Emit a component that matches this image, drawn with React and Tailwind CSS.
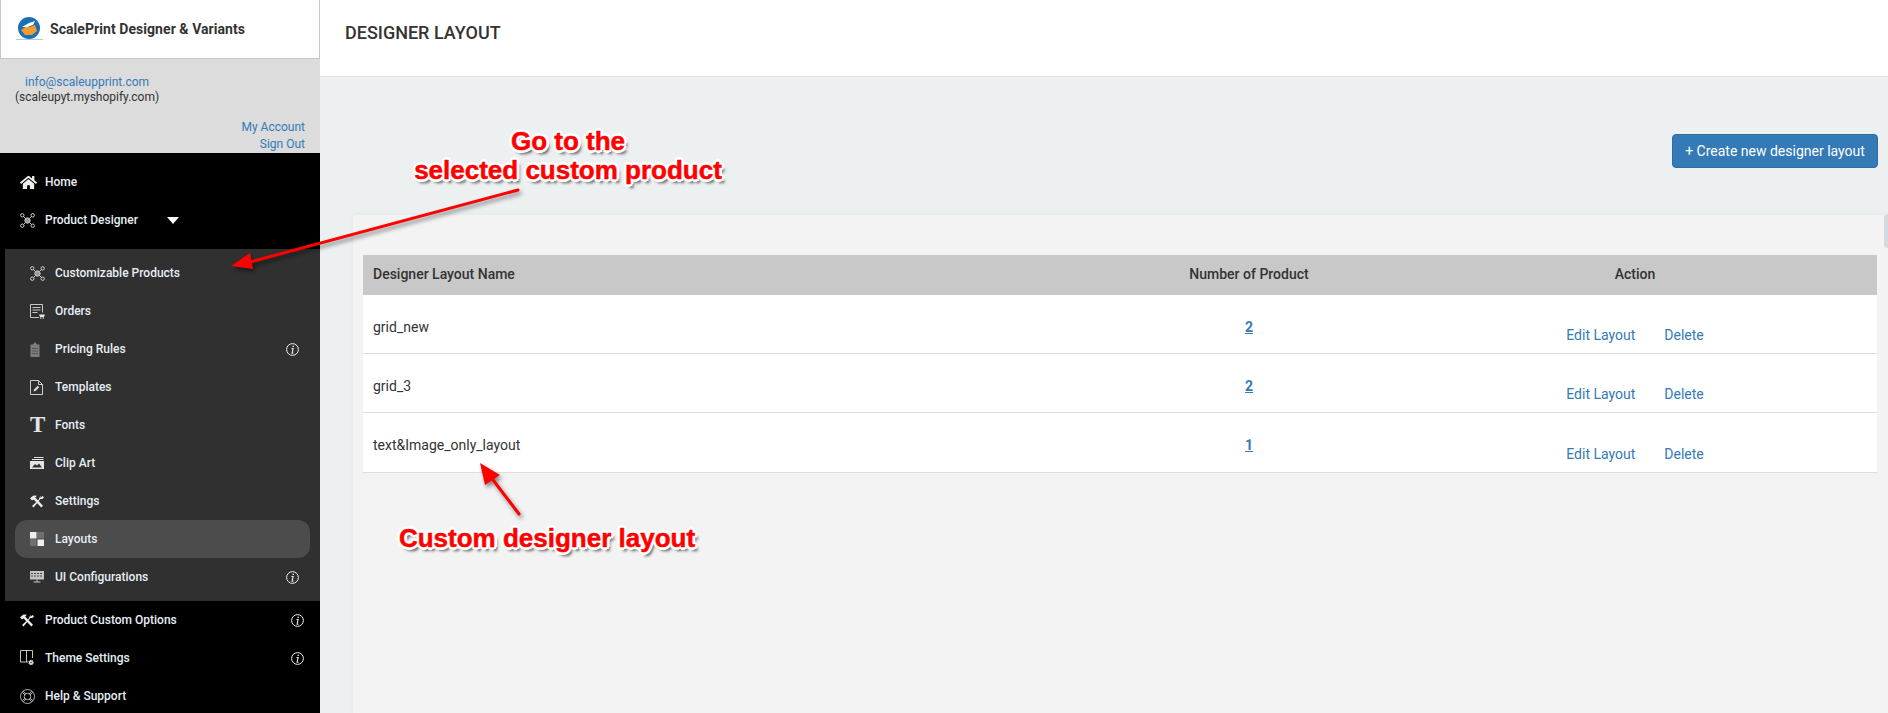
import { FaHome } from "react-icons/fa";

const font = { fontFamily: "Roboto, sans-serif" };

function InfoIcon() {
  return (
    <svg width="13" height="13" viewBox="0 0 13 13" fill="none" stroke="#f0f0f0">
      <circle cx="6.500" cy="6.500" r="5.900" strokeWidth="1" />
      <path d="M7.200 2.800v1.200" strokeWidth="1.400" />
      <path d="M5.500 5.500h1.600L6.100 10.200h1.400" strokeWidth="1.100" />
    </svg>
  );
}

function NodesIcon() {
  return (
    <svg width="15" height="15" viewBox="0 0 15 15" fill="none" stroke="#dcdcdc" strokeWidth="0.9">
      <circle cx="2.300" cy="2.300" r="1.700" />
      <circle cx="12.700" cy="2.300" r="1.700" />
      <circle cx="2.300" cy="12.700" r="1.700" />
      <circle cx="12.700" cy="12.700" r="1.700" />
      <path d="M3.500 3.500l2 2M11.500 3.500l-2 2M3.500 11.500l2-2M11.500 11.500l-2-2" />
      <circle cx="7.500" cy="7.500" r="2.700" fill="#9a9a9a" stroke="#cfcfcf" />
    </svg>
  );
}

function OrdersIcon() {
  return (
    <svg width="15" height="15" viewBox="0 0 15 15" fill="none" stroke="#d8d8d8" strokeWidth="0.9">
      <path d="M9 13.500H.500V.500h12v8" />
      <path d="M2.500 3.500h8M2.500 6h8M2.500 8.500h5" />
      <path d="M9 10.500h6l-1 2.500h-4z" fill="#e4e4e4" stroke="none" />
      <circle cx="10.800" cy="14" r="0.800" fill="#e4e4e4" stroke="none" />
      <circle cx="13.200" cy="14" r="0.800" fill="#e4e4e4" stroke="none" />
    </svg>
  );
}

function TagIcon() {
  return (
    <svg width="10" height="15" viewBox="0 0 10 15" fill="#7d7d7d">
      <path d="M5 0l2 2.500h2.500V15H.500V2.500H3z" />
      <path d="M2 6.500h6M2 9h6M2 11.500h6" stroke="#4d4d4d" strokeWidth="0.8" />
    </svg>
  );
}

function TemplateIcon() {
  return (
    <svg width="13" height="15" viewBox="0 0 13 15" fill="none" stroke="#e0e0e0" strokeWidth="0.9">
      <path d="M.500.500h8l4 4v10H.500z" />
      <path d="M8.500.500v4h4" />
      <path d="M3.500 11.500l.8-2.300 3.400-3.400 1.500 1.500-3.400 3.400z" fill="#e0e0e0" stroke="none" />
    </svg>
  );
}

function FontIcon() {
  return <span className="-mt-[2px] block text-[23px] leading-none font-bold text-[#e5e5e5]" style={{ fontFamily: "'Liberation Serif', serif" }}>T</span>;
}

function ClipIcon() {
  return (
    <svg width="14" height="12" viewBox="0 0 14 12" fill="#e4e4e4">
      <path d="M4 0h9.500v1H4zM2 2h11.500v1H2z" />
      <path d="M0 4h14v8H0zM2 10.500h10L9 6.500 7 8.500 5 7z" fillRule="evenodd" />
    </svg>
  );
}

function ToolsIcon() {
  return (
    <svg width="15" height="13" viewBox="0 0 15 13" fill="#ececec">
      <path d="M0 3.300L3.500.500 7 .800 5.200 2.600 13 10.800 11.300 12.500 3.700 4.400 2 5.600z" />
      <path d="M10.300.800l.3 2 1.900-1.700 1.500 1.200-1.600 1.800-2-.1L3.600 12.500 2 11 8.700 4.800z" />
    </svg>
  );
}

function LayoutIcon() {
  return (
    <svg width="14" height="14" viewBox="0 0 14 14">
      <path d="M0 0h6.500v6.500H0z" fill="#eeeeee" />
      <path d="M7 0h7v6.500H7zM0 7h6.500v7H0z" fill="#6f6f6f" />
      <path d="M7.500 7.500H14V14H7.500z" fill="#eeeeee" />
    </svg>
  );
}

function UiIcon() {
  return (
    <svg width="14" height="12" viewBox="0 0 14 12" fill="none">
      <path d="M0 0h14v8.500H0z" fill="#c4c4c4" />
      <path d="M1 2.500h12M1 5h12" stroke="#3a3a3a" strokeWidth="0.9" strokeDasharray="2 1" />
      <path d="M3.500 11h7M7 8.500V11" stroke="#c4c4c4" strokeWidth="1" />
    </svg>
  );
}

function ThemeIcon() {
  return (
    <svg width="14" height="16" viewBox="0 0 14 16" fill="none" stroke="#d8d8d8" strokeWidth="0.9">
      <path d="M8 12H.500V.500h12V8M6.500.500V12" />
      <circle cx="11" cy="12.500" r="2" fill="#ececec" stroke="#ececec" strokeDasharray="1 0.500" strokeWidth="1.300" />
      <circle cx="11" cy="12.500" r="0.700" fill="#000" stroke="none" />
    </svg>
  );
}

function HelpIcon() {
  return (
    <svg width="15" height="15" viewBox="0 0 15 15" fill="none" stroke="#d8d8d8" strokeWidth="0.8">
      <circle cx="7.500" cy="7.500" r="7" />
      <circle cx="7.500" cy="7.500" r="3.300" />
      <path d="M2.200 3.400l3 2.500M3.400 2.200l2.500 3M12.800 3.400l-3 2.500M11.600 2.200l-2.500 3M2.200 11.600l3-2.500M3.400 12.800l2.500-3M12.800 11.600l-3-2.500M11.600 12.800l-2.500-3" />
    </svg>
  );
}

function NavItem({ icon, label, info, active, sub }) {
  return (
    <div
      className={`flex h-[38px] items-center text-[12px] font-medium text-[#e6eef5] ${
        sub ? "mx-[10px] pl-[15px] pr-[11px]" : "pl-[20px] pr-[16px]"
      } ${active ? "rounded-[12px] bg-[#4c4c4c]" : ""}`}
    >
      <span className="flex w-[25px] shrink-0 items-center">{icon}</span>
      <span>{label}</span>
      {info && (
        <span className="ml-auto">
          <InfoIcon />
        </span>
      )}
    </div>
  );
}

const rows = [
  ["grid_new", "2"],
  ["grid_3", "2"],
  ["text&Image_only_layout", "1"],
];

function Arrow({ x1, y1, x2, y2, tip }) {
  return (
    <svg
      className="pointer-events-none absolute top-0 left-0 drop-shadow-[2px_3px_2px_rgba(0,0,0,0.45)]"
      width="1888"
      height="713"
      viewBox="0 0 1888 713"
      fill="none"
    >
      <line x1={x1} y1={y1} x2={x2} y2={y2} stroke="#ff0000" strokeWidth="3" strokeLinecap="round" />
      <polygon points={tip} fill="#ff0000" />
    </svg>
  );
}

const note =
  "absolute text-center text-[26px] leading-[29px] font-bold text-[#ff0000] [font-family:'Liberation_Sans',sans-serif] [-webkit-text-stroke:0.5px_#ff0000] [text-shadow:-3px_0_0_#fff,3px_0_0_#fff,0_-3px_0_#fff,0_3px_0_#fff,-2px_-2px_0_#fff,2px_-2px_0_#fff,-2px_2px_0_#fff,2px_2px_0_#fff,3px_4px_3px_#555]";

export default function App() {
  return (
    <div className="relative flex h-[713px] w-[1888px] overflow-hidden bg-[#ecf0f1] text-[#333]" style={font}>
      {/* Sidebar */}
      <div className="flex w-[320px] shrink-0 flex-col bg-black">
        <div className="flex h-[59px] shrink-0 items-center border-x border-b border-[#c8c8c8] bg-white pl-[15px]">
          <svg width="27" height="24" viewBox="0 0 27 24" className="shrink-0">
            <circle cx="13" cy="11" r="11" fill="#1a6fb5" />
            <path d="M5 13l6-4 3 1 5-2 2 6-5 4H9z" fill="#f59a2e" />
            <path d="M6 10l7-4 6-2-2 4-6 2z" fill="#ffffff" />
            <path d="M0 22.500h27" stroke="#a9cdec" strokeWidth="1" />
          </svg>
          <span className="ml-[7px] text-[14px] font-bold tracking-[0.06px] text-[#333]">ScalePrint Designer &amp; Variants</span>
        </div>
        <div className="h-[94px] shrink-0 bg-[#dcdcdc] pr-[15px] text-[12px] leading-[15px]">
          <div className="pt-[16px] pl-[25px] text-[#337ab7]">info@scaleupprint.com</div>
          <div className="pl-[15px] text-[#333]">(scaleupyt.myshopify.com)</div>
          <div className="mt-[14px] text-right leading-[17px] text-[#337ab7]">
            <div>My Account</div>
            <div>Sign Out</div>
          </div>
        </div>
        <div className="flex-1 pt-[10px]">
          <NavItem icon={<FaHome size={17} color="#eeeeee" />} label="Home" />
          <NavItem
            icon={<NodesIcon />}
            label={
              <span className="flex items-center">
                Product Designer
                <span className="ml-[29px] h-0 w-0 border-x-[6px] border-t-[7px] border-x-transparent border-t-white" />
              </span>
            }
          />
          <div className="mt-[10px] ml-[5px] bg-[#303030] py-[5px]">
            <NavItem sub icon={<NodesIcon />} label="Customizable Products" />
            <NavItem sub icon={<OrdersIcon />} label="Orders" />
            <NavItem sub icon={<TagIcon />} label="Pricing Rules" info />
            <NavItem sub icon={<TemplateIcon />} label="Templates" />
            <NavItem sub icon={<FontIcon />} label="Fonts" />
            <NavItem sub icon={<ClipIcon />} label="Clip Art" />
            <NavItem sub icon={<ToolsIcon />} label="Settings" />
            <NavItem sub active icon={<LayoutIcon />} label="Layouts" />
            <NavItem sub icon={<UiIcon />} label="UI Configurations" info />
          </div>
          <NavItem icon={<ToolsIcon />} label="Product Custom Options" info />
          <NavItem icon={<ThemeIcon />} label="Theme Settings" info />
          <NavItem icon={<HelpIcon />} label="Help & Support" />
        </div>
      </div>

      {/* Main */}
      <div className="flex min-w-0 flex-1 flex-col">
        <div className="flex h-[77px] shrink-0 items-center border-b border-[#dde1e3] bg-white pb-[11px] pl-[25px] text-[18px] font-medium text-[#333]">
          DESIGNER LAYOUT
        </div>
        <div className="flex justify-end pt-[57px] pr-[10px]">
          <button className="h-[34px] w-[206px] rounded-[4px] border border-[#2e6da4] bg-[#337ab7] text-[14px] text-white">
            + Create new designer layout
          </button>
        </div>
        <div className="mt-[47px] ml-[33px] flex-1 rounded-tl-[4px] bg-[#f3f3f3] pt-[40px] pl-[10px] shadow-[0_0_6px_rgba(0,0,0,0.04)]">
          <div className="w-[1514px]">
            <div className="grid h-[40px] grid-cols-[742px_288px_484px] items-center bg-[#c8c8c8] pb-[2px] text-[14px] font-medium text-[#333]">
              <div className="pl-[10px]">Designer Layout Name</div>
              <div className="text-center">Number of Product</div>
              <div className="text-center">Action</div>
            </div>
            {rows.map(([name, count]) => (
              <div key={name} className="group grid h-[59px] grid-cols-[742px_288px_484px] border-b border-[#dddddd] bg-white text-[14px] last:h-[60px]">
                <div className="pt-[22px] pl-[10px] leading-[20px]">{name}</div>
                <div className="pt-[22px] text-center leading-[20px] font-bold text-[#337ab7] underline">{count}</div>
                <div className="flex justify-center gap-[29px] pt-[30px] leading-[20px] text-[#337ab7] group-last:pt-[31px]">
                  <span>Edit Layout</span>
                  <span>Delete</span>
                </div>
              </div>
            ))}
          </div>
        </div>
      </div>

      {/* scrollbar thumb at the card edge */}
      <div className="absolute top-[214px] right-0 h-[34px] w-[4px] rounded-l-[4px] bg-[#d5dade]" />

      {/* Annotations */}
      <Arrow x1={518} y1={190} x2={250} y2={262} tip="231,266 250,253 253,269" />
      <Arrow x1={519} y1={514} x2={490} y2={476} tip="480,463 500,475 485,485" />
      <div className={`${note} top-[127px] left-[403px] w-[330px]`}>
        Go to the
        <br />
        selected custom product
      </div>
      <div className={`${note} top-[524px] left-[382px] w-[330px]`}>Custom designer layout</div>
    </div>
  );
}
